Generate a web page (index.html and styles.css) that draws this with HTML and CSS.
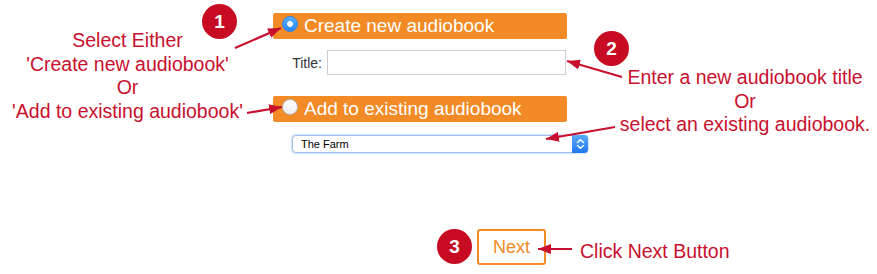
FILE: index.html
```html
<!DOCTYPE html>
<html lang="en">

<head>
  <meta charset="UTF-8">
  <title>Audiobook - Step</title>
  <link rel="stylesheet" href="styles.css">
</head>

<body>
  <div class="page">
    <form class="form">
      <label class="choice">
        <span class="radio checked"></span>
        <span>Create new audiobook</span>
      </label>
      <div class="title-row">
        <span class="title-label">Title:</span>
        <input type="text" class="title-input">
      </div>
      <label class="choice choice-add">
        <span class="radio"></span>
        <span>Add to existing audiobook</span>
      </label>
      <div class="select">
        <span class="select-text">The Farm</span>
        <span class="select-btn">
          <svg width="9" height="12" viewBox="0 0 9 12">
            <path d="M1.5 4.5 L4.5 1.8 L7.5 4.5 M1.5 7.5 L4.5 10.2 L7.5 7.5" fill="none" stroke="#fff" stroke-width="1.5" stroke-linecap="round" stroke-linejoin="round" />
          </svg>
        </span>
      </div>
      <button type="button" class="next">Next</button>
    </form>

    <!-- callouts -->
    <div class="badge badge-1">1</div>
    <div class="badge badge-2">2</div>
    <div class="badge badge-3">3</div>

    <div class="note note-left">Select Either<br>'Create new audiobook'<br>Or<br>'Add to existing audiobook'</div>
    <div class="note note-right">Enter a new audiobook title<br>Or<br>select an existing audiobook.</div>
    <div class="note note-next">Click Next Button</div>

    <svg class="arrows" width="877" height="274" viewBox="0 0 877 274">
      <defs>
        <marker id="head" markerUnits="userSpaceOnUse" markerWidth="13" markerHeight="10" refX="13" refY="5" orient="auto">
          <path d="M0 0 L13 5 L0 10 z" fill="#c8102e" />
        </marker>
      </defs>
      <g stroke="#c8102e" stroke-width="2.2" marker-end="url(#head)">
        <line x1="235" y1="48" x2="281" y2="28" />
        <line x1="247" y1="113" x2="282" y2="107" />
        <line x1="622" y1="77" x2="567" y2="61" />
        <line x1="615" y1="127" x2="546" y2="139" />
        <line x1="572" y1="249" x2="538" y2="249" />
      </g>
    </svg>
  </div>
</body>

</html>
```

FILE: styles.css
```css
body {
  margin: 0;
  background: #fff;
  font-family: "Liberation Sans", Arial, sans-serif;
}

.page {
  position: relative;
  width: 877px;
  height: 274px;
  overflow: hidden;
}

.form {
  display: flex;
  flex-direction: column;
  align-items: flex-start;
  width: 294px;
  margin: 0 0 0 273px;
  padding-top: 13px;
}

.choice {
  display: flex;
  align-items: flex-start;
  gap: 6px;
  box-sizing: border-box;
  width: 294px;
  height: 26px;
  padding-left: 9px;
  border-radius: 2px;
  background: #f28a26;
  color: #fff;
  font-size: 19px;
  line-height: 26px;
}

.choice-add {
  margin-top: 21px;
}

.radio {
  flex: none;
  box-sizing: border-box;
  width: 16px;
  height: 16px;
  margin-top: 3px;
  border-radius: 50%;
  border: 1px solid #b9b9b9;
  background: linear-gradient(#fff, #eeeeee);
}

.radio.checked {
  border-color: #2f86ec;
  background: radial-gradient(circle, #fff 0 2.6px, transparent 3.2px), linear-gradient(#5aaeff, #2a86f6);
}

.title-row {
  display: flex;
  align-items: center;
  justify-content: flex-end;
  gap: 5px;
  width: 293px;
  margin-top: 11px;
}

.title-label {
  font-size: 14px;
  color: #333;
}

.title-input {
  box-sizing: border-box;
  width: 239px;
  height: 25px;
  margin: 0;
  border: 1px solid #cfcfcf;
  background: #fff;
}

.select {
  display: flex;
  align-items: center;
  justify-content: space-between;
  box-sizing: border-box;
  width: 296px;
  height: 18px;
  margin: 13px 0 0 19px;
  border: 1px solid #9fc0ea;
  border-radius: 4px;
  box-shadow: 0 0 2px 1px #cfe2fa;
  background: #fff;
}

.select-text {
  padding-left: 8px;
  font-size: 11px;
  color: #000;
}

.select-btn {
  display: flex;
  align-items: center;
  justify-content: center;
  width: 16px;
  height: 18px;
  margin-right: -1px;
  border-radius: 0 4px 4px 0;
  background: linear-gradient(#5eabf9, #1d76ef);
}

.next {
  box-sizing: border-box;
  width: 69px;
  height: 36px;
  margin: 76px 0 0 204px;
  padding: 0;
  border: 2px solid #f28a26;
  border-radius: 3px;
  background: #fff;
  color: #f28a26;
  font-family: "Liberation Sans", Arial, sans-serif;
  font-size: 18px;
}

.badge {
  position: absolute;
  width: 35px;
  height: 35px;
  border-radius: 50%;
  background: #c70b22;
  color: #fff;
  font-size: 19px;
  font-weight: bold;
  line-height: 35px;
  text-align: center;
}

.badge-1 { left: 202px; top: 4px; }
.badge-2 { left: 594px; top: 31px; }
.badge-3 { left: 437px; top: 229px; }

.note {
  position: absolute;
  color: #c8102e;
  font-size: 19.5px;
  line-height: 23.5px;
  text-align: center;
  white-space: nowrap;
}

.note-left { left: 0; top: 29px; width: 255px; }
.note-right { left: 615px; top: 66px; width: 260px; }
.note-next { left: 580px; top: 240px; }

.arrows {
  position: absolute;
  left: 0;
  top: 0;
  pointer-events: none;
}
```
